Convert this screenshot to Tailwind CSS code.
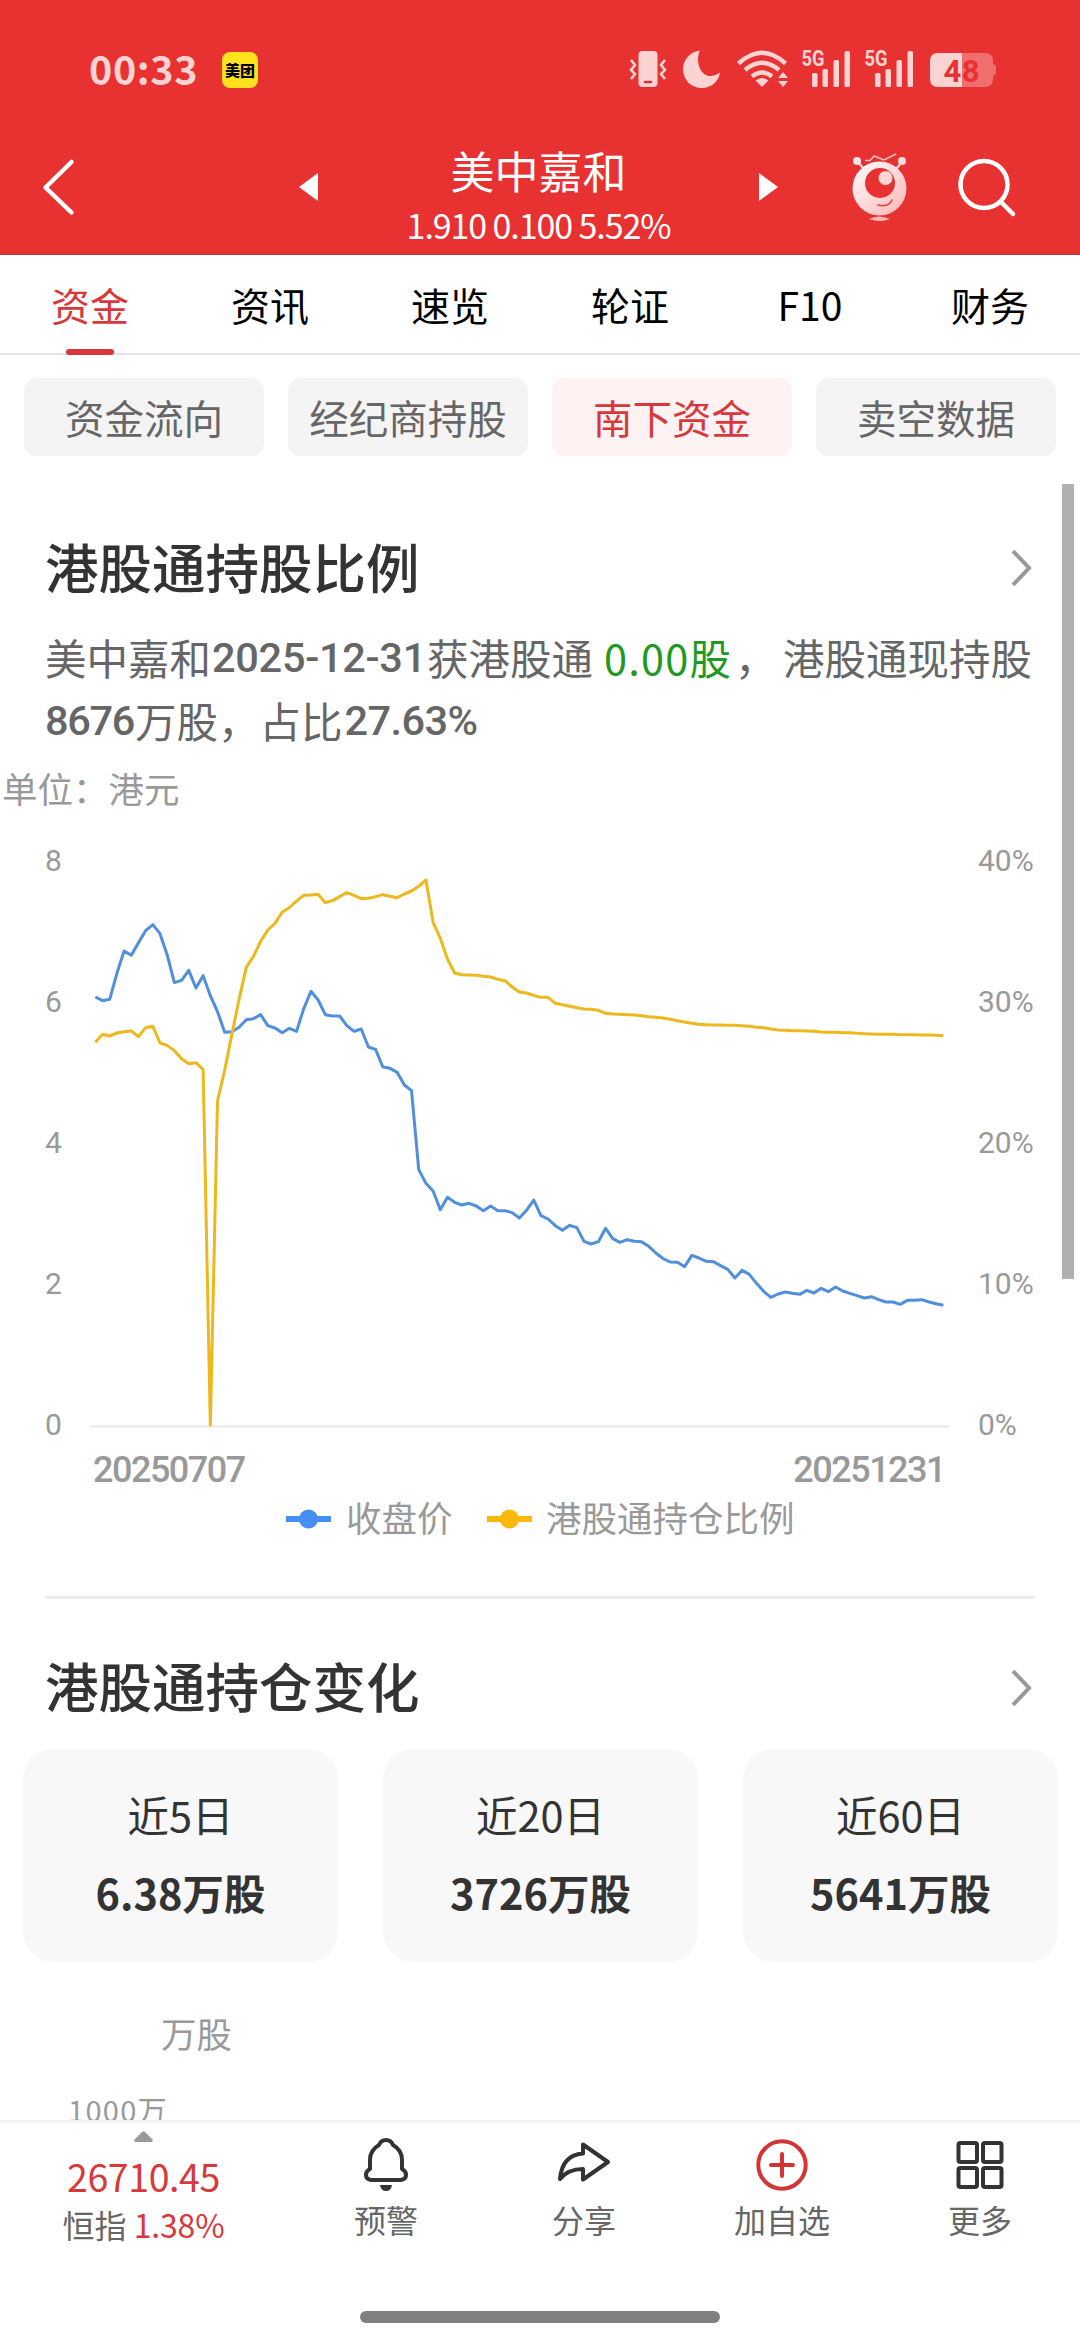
<!DOCTYPE html>
<html lang="zh-CN">

<head>
  <meta charset="UTF-8">
  <meta name="viewport" content="width=device-width, initial-scale=1.0">
  <title>美中嘉和</title>
  <script src="https://cdn.jsdelivr.net/npm/@tailwindcss/browser@4"></script>
</head>

<body class="bg-white font-['Noto_Sans_CJK_SC',sans-serif]">
  <div class="relative flex flex-col w-[1080px] h-[2344px] overflow-hidden whitespace-nowrap">

    <header class="h-[255px] shrink-0 bg-[#e83131] border-b border-[#b04040] text-white">
      <!-- status bar -->
      <div class="flex items-center h-[138px] pl-[89px] pr-[84px]">
        <span class="w-[112px] -mt-[3px] text-[39.500px] leading-none tracking-[0.6px] font-bold text-[#fbd3d3]">00:33</span>
        <span class="flex items-center justify-center size-9 ml-[21px] mt-0.5 rounded-lg bg-[#fee21e] text-[15px] leading-none font-black text-black"><span class="-mt-0.5">美团</span></span>
        <div class="flex items-center ml-auto text-[#fbd3d3]">
          <svg class="w-[39px] h-[42px]" viewBox="629 48 39 42" fill="none" stroke="currentColor">
            <rect x="638.500" y="51" width="19" height="36" rx="4" fill="currentColor" stroke="none" />
            <path d="M645 82h6" stroke="#c83a3a" stroke-width="2.5" stroke-linecap="round" />
            <path d="M631 60l4 5-4 5 4 4-4 5M665 60l-4 5 4 5-4 4 4 5" stroke-width="2.6" />
          </svg>
          <svg class="w-[39px] h-[42px] ml-[14px]" viewBox="682 48 39 42" fill="currentColor">
            <path d="M700 50.500C696 58 698 74 709 76C713 76.500 717 74.500 720 72.500C719 81.500 711 88 702 88C691 88 683 80 683 69C683 60 690 51.500 700 50.500Z" />
          </svg>
          <svg class="w-[52px] h-[42px] ml-[15px]" viewBox="736 48 52 42" fill="none" stroke="currentColor" stroke-width="4.500">
            <path d="M738.500 63.500Q762 42 785.500 63.500M745 70Q762 55.500 779 70M752 76.500Q762 68.500 772 76.500" />
            <path d="M762 87l-6.500-6.500q6.500-5 13 0z" fill="currentColor" stroke="none" />
            <path d="M783 72l5 6h-10zM783 87l5-6h-10z" fill="currentColor" stroke="none" />
          </svg>
          <svg class="w-[50px] h-[54px] ml-[13px]" viewBox="801 42 50 54" fill="currentColor">
            <text x="801.500" y="65.500" font-size="21.500" font-weight="700" font-family="Roboto" textLength="23" lengthAdjust="spacingAndGlyphs">5G</text>
            <rect x="812" y="73" width="5.500" height="14" rx="1.500" />
            <rect x="822.500" y="69" width="5.500" height="18" rx="1.500" />
            <rect x="833.500" y="60" width="5.500" height="27" rx="1.500" />
            <rect x="844.500" y="51" width="5.500" height="36" rx="1.500" />
          </svg>
          <svg class="w-[50px] h-[54px] ml-[13px]" viewBox="801 42 50 54" fill="currentColor">
            <text x="801.500" y="65.500" font-size="21.500" font-weight="700" font-family="Roboto" textLength="23" lengthAdjust="spacingAndGlyphs">5G</text>
            <rect x="812" y="73" width="5.500" height="14" rx="1.500" />
            <rect x="822.500" y="69" width="5.500" height="18" rx="1.500" />
            <rect x="833.500" y="60" width="5.500" height="27" rx="1.500" />
            <rect x="844.500" y="51" width="5.500" height="36" rx="1.500" />
          </svg>
          <svg class="w-[66px] h-[42px] ml-4" viewBox="930 48 66 42">
            <path d="M962 53h23q8 0 8 8v3q3 1 3 3v6q0 2-3 3v3q0 8-8 8h-23z" fill="#f16e6e" />
            <path d="M962 53h-24q-8 0-8 8v18q0 8 8 8h24z" fill="#fbd3d3" />
            <text x="943.500" y="81.500" font-size="31" font-weight="700" font-family="Roboto" fill="#e83131" textLength="36">48</text>
          </svg>
        </div>
      </div>
      <!-- title bar -->
      <div class="flex items-start h-[116px] pl-[42px]">
        <svg class="w-[34px] h-[60px] mt-[19px]" viewBox="42 157 34 60" fill="none" stroke="currentColor" stroke-width="4.500" stroke-linecap="round" stroke-linejoin="round">
          <path d="M71.500 162L45.500 187.500L71.500 212.500" />
        </svg>
        <svg class="w-[19px] h-[28px] ml-[223px] mt-[35px]" viewBox="0 0 19 28" fill="currentColor"><path d="M19 0v28L0 14z" /></svg>
        <div class="w-[441px] flex flex-col items-center">
          <h1 class="mt-[9px] text-[44px] leading-[46px]">美中嘉和</h1>
          <p class="mt-[12px] text-[34px] leading-[40px] tracking-[-1.1px]">1.910 0.100 5.52%</p>
        </div>
        <svg class="w-[19px] h-[28px] mt-[35px]" viewBox="0 0 19 28" fill="currentColor"><path d="M0 0v28L19 14z" /></svg>
        <svg class="w-[58px] h-[70px] ml-[73px] mt-[15px]" viewBox="851 153 58 70">
          <defs>
            <linearGradient id="face" x1="0" y1="0" x2="1" y2="1">
              <stop offset="0.200" stop-color="#fff0f0" />
              <stop offset="1" stop-color="#ffb4b4" />
            </linearGradient>
          </defs>
          <path d="M858 162l6 7M902 162l-6 7" stroke="#ffe6e6" stroke-width="2" />
          <circle cx="857" cy="161" r="4" fill="#ffe6e6" />
          <circle cx="902" cy="161" r="4" fill="#ffd9d9" />
          <path d="M865 160.500h5l4-4.500 10 4 12-6" fill="none" stroke="#ffc0c0" stroke-width="1.500" />
          <circle cx="879.500" cy="188.500" r="27" fill="url(#face)" />
          <circle cx="880" cy="183" r="15" fill="#e83131" />
          <circle cx="885.500" cy="178" r="7" fill="#ffd5d5" />
          <path d="M878 205q11 2.500 14-5" fill="none" stroke="#d84343" stroke-width="1.600" stroke-linecap="round" />
          <path d="M869 219q10-5 21 0q-10 4-21 0z" fill="#ffb4b4" />
        </svg>
        <svg class="w-[60px] h-[62px] ml-[48px] mt-[19px]" viewBox="957 157 60 62" fill="none" stroke="currentColor" stroke-width="4.500" stroke-linecap="round">
          <circle cx="984" cy="184.500" r="23.500" />
          <path d="M1001 202l12 12" />
        </svg>
      </div>
    </header>

    <nav class="relative grid grid-cols-6 h-[100px] shrink-0 border-b-2 border-[#e2e2e2] text-[39px] leading-[99px] text-center text-black">
      <a class="text-[#d9383a]">资金</a>
      <a>资讯</a>
      <a>速览</a>
      <a>轮证</a>
      <a>F10</a>
      <a>财务</a>
      <span class="absolute left-[66px] -bottom-[2px] w-12 h-[6px] rounded-sm bg-[#d9383a]"></span>
    </nav>

    <div class="grid grid-cols-4 gap-6 px-6 mt-[23px] h-[78px] shrink-0 text-[39.500px] leading-[77px] text-center text-[#666]">
      <span class="rounded-xl bg-[#f4f4f4]">资金流向</span>
      <span class="rounded-xl bg-[#f4f4f4]">经纪商持股</span>
      <span class="rounded-xl bg-[#fef2f2] text-[#d9383a]">南下资金</span>
      <span class="rounded-xl bg-[#f4f4f4]">卖空数据</span>
    </div>

    <section class="h-[1140px] shrink-0 pt-[76px]">
      <div class="flex items-center justify-between h-[72px] pl-[45px] pr-[47px]">
        <h2 class="-mt-[5px] text-[53.500px] leading-[72px] font-medium text-[#333]">港股通持股比例</h2>
        <svg class="w-[22px] h-[38px]" viewBox="0 0 22 38" fill="none" stroke="#999" stroke-width="4"><path d="M2 2l16 17L2 36" /></svg>
      </div>
      <div class="mt-[22px] pl-[45px] text-[41.500px] leading-[62px] text-[#666]">
        <p class="flex">美中嘉和<b class="w-[216px] pl-px pt-px font-medium font-[Roboto] tracking-[-0.3px]">2025-12-31</b>获港股通<span class="w-[131px] ml-[11px] text-[#1f991f]"><span class="tracking-[1.200px]">0.00</span>股</span><span class="w-[48px]">，</span>港股通现持股</p>
        <p class="flex"><b class="w-[90px] pt-px font-medium font-[Roboto] tracking-[-1.3px]">8676</b>万股，占比<b class="pl-0.5 pt-px font-medium font-[Roboto] tracking-[-0.6px]">27.63%</b></p>
      </div>
      <p class="mt-[10px] pl-[2px] text-[35.500px] leading-[52px] text-[#999]">单位：港元</p>

      <!-- chart -->
      <div class="flex mt-[30px] h-[597px] font-[Roboto] text-[30px] leading-[30px] text-[#999]">
        <div class="flex flex-col justify-between w-[90px] pl-[45px] mt-[2px] h-[594px]">
          <span>8</span><span>6</span><span>4</span><span>2</span><span>0</span>
        </div>
        <svg class="w-[859px] h-[590px]" viewBox="270 12 2577 1770" fill="none" stroke-width="9" stroke-linejoin="round">
          <path d="M270 1759h2577" stroke="#eee" stroke-width="8" />
          <polyline id="price" stroke="#508fdd" />
          <polyline id="ratio" stroke="#edb81c" />
        </svg>
        <div class="flex flex-col justify-between ml-[29px] mt-[2px] h-[594px]">
          <span>40%</span><span>30%</span><span>20%</span><span>10%</span><span>0%</span>
        </div>
      </div>
      <div class="flex justify-between mt-[9px] pl-[93px] pr-[135px] font-[Roboto] font-medium text-[36px] leading-[40px] tracking-[-1.5px] text-[#999]">
        <span>20250707</span><span>20251231</span>
      </div>
      <div class="flex items-center mt-[4px] pl-[286px] text-[35.500px] leading-[52px] text-[#999]">
        <svg class="w-[45px] h-5" viewBox="0 0 45 20" fill="#468ff2"><path d="M0 7h45v6H0z" /><circle cx="22.500" cy="10" r="9.500" /></svg>
        <span class="w-[141px] ml-[15px] -mt-[3px]">收盘价</span>
        <svg class="w-[45px] h-5" viewBox="0 0 45 20" fill="#fab90a"><path d="M0 7h45v6H0z" /><circle cx="22.500" cy="10" r="9.500" /></svg>
        <span class="ml-[14px] -mt-[3px]">港股通持仓比例</span>
      </div>
    </section>

    <section class="mx-[45px] h-[153px] shrink-0 border-t-[3px] border-[#ececec] pt-[53px]">
      <div class="flex items-center justify-between h-[72px] pr-[2px]">
        <h2 class="-mt-[6px] text-[53.500px] leading-[72px] font-medium text-[#333]">港股通持仓变化</h2>
        <svg class="w-[22px] h-[38px]" viewBox="0 0 22 38" fill="none" stroke="#999" stroke-width="4"><path d="M2 2l16 17L2 36" /></svg>
      </div>
    </section>

    <div class="grid grid-cols-3 gap-[45px] h-[213px] shrink-0 pl-[23px] pr-[22px] text-center text-[41.500px] leading-[60px] text-[#333]">
      <div class="rounded-[30px] bg-[#f8f8f8] pt-[35px]">
        <p>近5日</p>
        <p class="mt-[18px] font-bold">6.38万股</p>
      </div>
      <div class="rounded-[30px] bg-[#f8f8f8] pt-[35px]">
        <p>近20日</p>
        <p class="mt-[18px] font-bold">3726万股</p>
      </div>
      <div class="rounded-[30px] bg-[#f8f8f8] pt-[35px]">
        <p>近60日</p>
        <p class="mt-[18px] font-bold">5641万股</p>
      </div>
    </div>

    <div class="h-[158px] shrink-0 overflow-hidden text-[#999]">
      <p class="mt-[45px] pl-[161px] text-[35.500px] leading-[52px]">万股</p>
      <p class="mt-[28px] pl-[68px] text-[29px] leading-[44px]"><span class="tracking-[1.300px]">1000</span>万</p>
    </div>

    <footer class="flex h-[191px] shrink-0 border-t-[3px] border-[#f4f4f4] text-[32px] leading-[40px] text-[#666]">
      <div class="flex flex-col items-center w-[287px]">
        <svg class="w-[19px] h-[11px] mt-[8px]" viewBox="0 0 19 11" fill="#999"><path d="M8 1q1.500-1.500 3 0l7.500 7.500q1 2.500-1.500 2.500h-15q-2.500 0-1.500-2.500z" /></svg>
        <span class="mt-[14px] text-[37.500px] leading-[40px] tracking-[-0.4px] text-[#d9383a]">26710.45</span>
        <span class="mt-[8px]">恒指 <span class="tracking-[-0.2px] text-[#d9383a]">1.38%</span></span>
      </div>
      <div class="flex flex-col items-center w-[198px]">
        <svg class="w-[48px] h-[56px] mt-[14px]" viewBox="362 2137 48 56" fill="none" stroke="#333" stroke-width="4" stroke-linejoin="round">
          <path d="M386 2140q-5 0-7 5q-9 5-9 15v9q-4 2-4 6t5 5h30q5-1 5-5t-4-6v-9q0-10-9-15q-2-5-7-5z" />
          <path d="M380 2185h12q-1 6-6 6t-6-6z" fill="#333" stroke="none" />
        </svg>
        <span class="mt-[6px]">预警</span>
      </div>
      <div class="flex flex-col items-center w-[198px]">
        <svg class="w-[54px] h-[56px] mt-[14px]" viewBox="557 2137 54 56" fill="none" stroke="#333" stroke-width="4" stroke-linejoin="round">
          <path d="M583 2144.500l25 17.500-25 17.500v-10.500q-15 0-23 10q2-24 23-25.500z" />
        </svg>
        <span class="mt-[6px]">分享</span>
      </div>
      <div class="flex flex-col items-center w-[198px]">
        <svg class="w-[56px] h-[56px] mt-[14px]" viewBox="0 0 56 56" fill="none" stroke="#d33535" stroke-width="4" stroke-linecap="round">
          <circle cx="28" cy="28" r="23.700" />
          <path d="M28 17v22M17 28h22" />
        </svg>
        <span class="mt-[6px]">加自选</span>
      </div>
      <div class="flex flex-col items-center w-[198px]">
        <svg class="w-[48px] h-[56px] mt-[14px]" viewBox="0 0 48 56" fill="none" stroke="#333" stroke-width="4">
          <rect x="2.500" y="6" width="18.500" height="19" rx="2" />
          <rect x="27" y="6" width="18.500" height="19" rx="2" />
          <rect x="2.500" y="31" width="18.500" height="19" rx="2" />
          <rect x="27" y="31" width="18.500" height="19" rx="2" />
        </svg>
        <span class="mt-[6px]">更多</span>
      </div>
    </footer>

    <div class="w-[360px] h-3 shrink-0 mx-auto rounded-full bg-[#808080]"></div>

    <!-- scrollbar -->
    <div class="absolute left-[1062px] top-[484px] w-3 h-[795px] bg-[#b0b0b0]"></div>
  </div>

  <script>
    // One value per trading day, measured down from the top of the plot.
    const price = [
      471, 482, 478, 400, 333, 346, 308, 272, 254, 281, 345, 428, 421, 391, 444, 407, 467, 515, 577, 575,
      562, 539, 536, 524, 557, 564, 578, 565, 574, 506, 454, 480, 524, 528, 528, 557, 574, 567, 621, 628,
      681, 685, 697, 735, 752, 989, 1030, 1053, 1109, 1072, 1087, 1095, 1090, 1098, 1112, 1098, 1112, 1112, 1118, 1134,
      1111, 1080, 1127, 1137, 1157, 1171, 1156, 1163, 1204, 1212, 1205, 1165, 1196, 1207, 1199, 1204, 1205, 1219, 1239, 1256,
      1266, 1267, 1280, 1246, 1254, 1264, 1265, 1277, 1288, 1314, 1291, 1303, 1330, 1354, 1372, 1362, 1356, 1360, 1363, 1351,
      1359, 1345, 1355, 1341, 1353, 1360, 1367, 1374, 1370, 1379, 1386, 1386, 1393, 1381, 1381, 1379, 1386, 1391, 1396
    ];
    const ratio = [
      607, 583, 588, 579, 575, 573, 590, 563, 559, 609, 616, 632, 656, 671, 668, 689, 1756, 783, 690, 583,
      478, 382, 349, 304, 270, 250, 216, 203, 183, 166, 165, 163, 188, 182, 170, 158, 166, 176, 175, 170,
      164, 169, 173, 162, 153, 139, 120, 247, 295, 357, 399, 404, 405, 406, 409, 411, 418, 422, 441, 456,
      459, 466, 472, 472, 490, 494, 499, 503, 507, 508, 511, 520, 522, 523, 524, 525, 527, 530, 532, 534,
      538, 542, 546, 550, 553, 554, 555, 555, 556, 556, 557, 559, 562, 563, 567, 570, 571, 572, 572, 573,
      574, 576, 577, 577, 578, 578, 580, 581, 582, 583, 583, 583, 584, 584, 584, 585, 585, 586, 587
    ];

    function draw(id, values) {
      const points = values.map((y, i) => (286 + i * 21.56).toFixed(1) + ',' + y);
      document.getElementById(id).setAttribute('points', points.join(' '));
    }

    draw('price', price);
    draw('ratio', ratio);
  </script>
</body>

</html>
